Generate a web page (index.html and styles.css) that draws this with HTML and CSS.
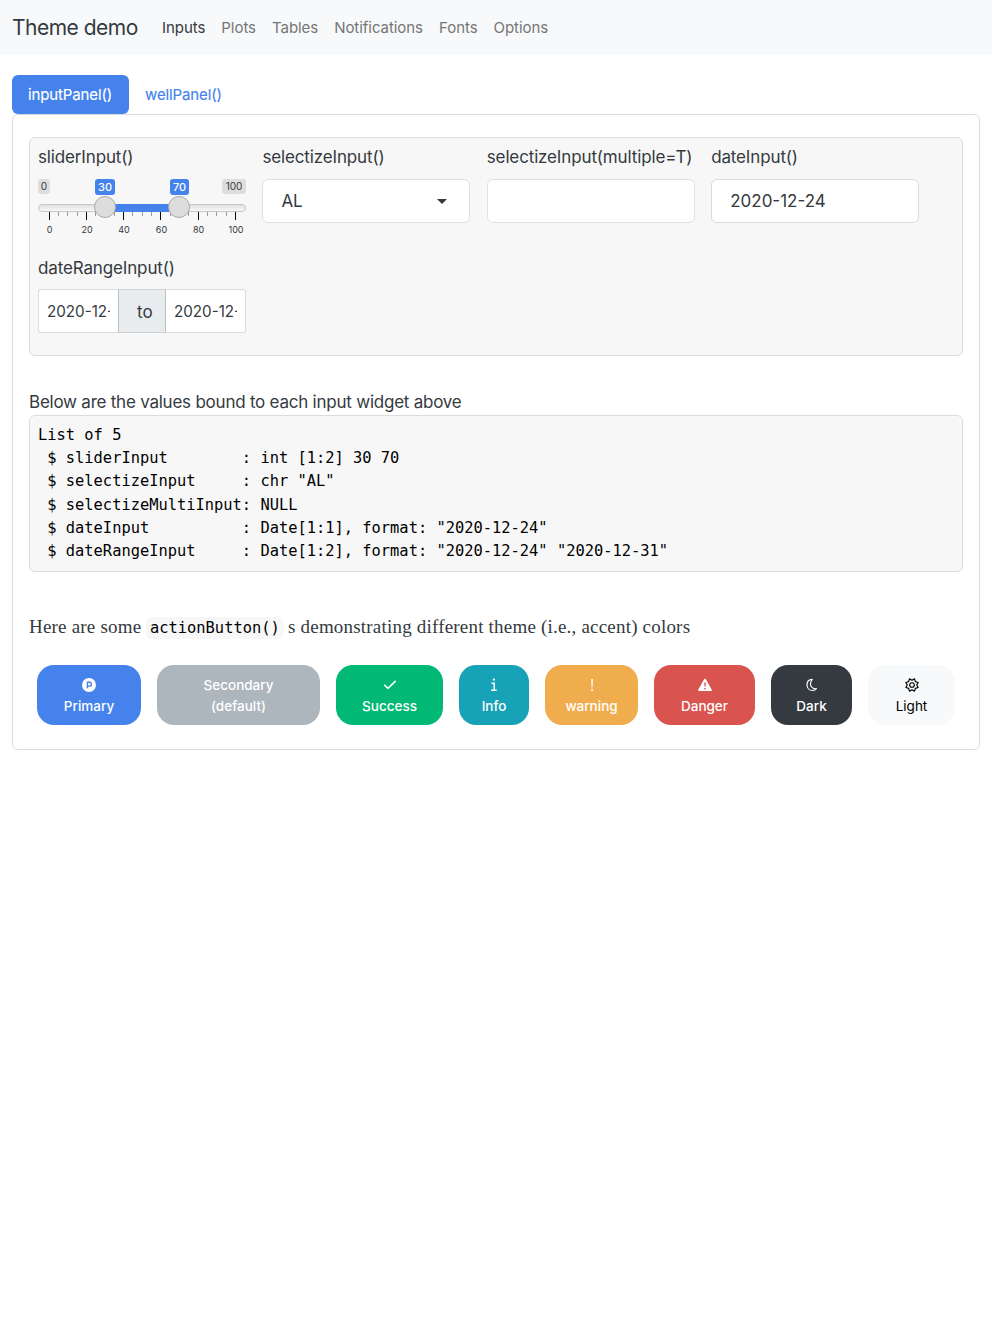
FILE: index.html
```html
<!DOCTYPE html>
<html lang="en">
<head>
<meta charset="utf-8">
<title>Theme demo</title>
<link rel="stylesheet" href="styles.css">
</head>
<body>
<nav class="navbar">
  <span class="brand">Theme demo</span>
  <a class="nav-link active">Inputs</a>
  <a class="nav-link">Plots</a>
  <a class="nav-link">Tables</a>
  <a class="nav-link">Notifications</a>
  <a class="nav-link">Fonts</a>
  <a class="nav-link">Options</a>
</nav>
<main class="container">
  <div class="tabs">
    <a class="tab active">inputPanel()</a>
    <a class="tab">wellPanel()</a>
  </div>
  <section class="card">
    <div class="input-panel">
      <div class="field">
        <label>sliderInput()</label>
        <svg class="slider" width="208" height="60" viewBox="0 0 208 60">
          <defs>
            <linearGradient id="track" x1="0" y1="0" x2="0" y2="1"><stop offset="0" stop-color="#dedede"/><stop offset="1" stop-color="#fafafa"/></linearGradient>
          </defs>
          <rect x="0" y="0" width="12" height="15" rx="3" fill="#dddddd"/>
          <rect x="184" y="0" width="24" height="15" rx="3" fill="#dddddd"/>
          <rect x="57" y="0" width="20" height="16" rx="3" fill="#4582ec"/>
          <rect x="132" y="0" width="19" height="16" rx="3" fill="#4582ec"/>
          <g class="limit"><text x="6" y="11">0</text><text x="196" y="11">100</text></g>
          <g class="value"><text x="67" y="12">30</text><text x="141.500" y="12">70</text></g>
          <rect x=".5" y="25.500" width="207" height="7" rx="3.500" fill="url(#track)" stroke="#c6c6c6"/>
          <rect x="67" y="25" width="74" height="8" fill="#4582ec"/>
          <path d="M11.500 33v8M48.500 33v8M85.500 33v8M122.500 33v8M160.500 33v8M197.500 33v8" stroke="#000"/>
          <path d="M20.500 33v4M29.500 33v4M39.500 33v4M57.500 33v4M67.500 33v4M76.500 33v4M94.500 33v4M104.500 33v4M113.500 33v4M132.500 33v4M141.500 33v4M150.500 33v4M169.500 33v4M178.500 33v4M188.500 33v4" stroke="#999"/>
          <circle cx="67" cy="28" r="10.500" fill="#dddddd" stroke="#aaa"/>
          <circle cx="141" cy="28" r="10.500" fill="#dddddd" stroke="#aaa"/>
          <g class="scale"><text x="11.500" y="54">0</text><text x="49" y="54">20</text><text x="86" y="54">40</text><text x="123.500" y="54">60</text><text x="160.500" y="54">80</text><text x="198" y="54">100</text></g>
        </svg>
      </div>
      <div class="field">
        <label>selectizeInput()</label>
        <div class="control"><span>AL</span><i class="caret"></i></div>
      </div>
      <div class="field">
        <label>selectizeInput(multiple=T)</label>
        <div class="control"></div>
      </div>
      <div class="field">
        <label>dateInput()</label>
        <div class="control date"><span>2020-12-24</span></div>
      </div>
      <div class="field range-field">
        <label>dateRangeInput()</label>
        <div class="range">
          <div class="range-input start"><span>2020-12-24</span></div>
          <div class="addon">to</div>
          <div class="range-input end"><span>2020-12-31</span></div>
        </div>
      </div>
    </div>
    <p class="lead">Below are the values bound to each input widget above</p>
    <pre class="output">List of 5
 $ sliderInput        : int [1:2] 30 70
 $ selectizeInput     : chr "AL"
 $ selectizeMultiInput: NULL
 $ dateInput          : Date[1:1], format: "2020-12-24"
 $ dateRangeInput     : Date[1:2], format: "2020-12-24" "2020-12-31"</pre>
    <p class="serif"><span class="s1">Here are some</span><code>actionButton()</code><span class="s2">s demonstrating different theme (i.e., accent) colors</span></p>
    <div class="buttons">
      <button class="btn primary"><svg viewBox="0 0 14 14"><circle cx="7" cy="7" r="7" fill="#fff"/><path d="M5.400 10.300V4.300h2.100a1.900 1.900 0 0 1 0 3.800H5.400" fill="none" stroke="#4582ec" stroke-width="1.400"/></svg><span>Primary</span></button>
      <button class="btn secondary"><span>Secondary</span><span>(default)</span></button>
      <button class="btn success"><svg viewBox="0 0 14 14"><path d="M1.200 6.800 4.900 10.400 12.700 2.900" fill="none" stroke="#fff" stroke-width="1.500"/></svg><span>Success</span></button>
      <button class="btn info"><svg viewBox="0 0 14 14"><path d="M4.500 5.200h2.700v6.700M4 12.300h5.700" fill="none" stroke="#fff" stroke-width="1.500"/><circle cx="6.900" cy="1.700" r="1.150" fill="#fff"/></svg><span>Info</span></button>
      <button class="btn warn"><svg viewBox="0 0 14 14"><path d="M6.200 1h1.700l-.3 8.200H6.500zM6.200 10.800h1.700v1.900H6.200z" fill="#fff"/></svg><span>warning</span></button>
      <button class="btn danger"><svg viewBox="0 0 14 14"><path d="M7 .8q.6 0 .9.500l5.900 10.500q.4 1.200-.8 1.300H1q-1.200-.1-.8-1.300L6.100 1.300q.3-.5.900-.5z" fill="#fff"/><path d="M6.200 4.500h1.600l-.3 4.300h-1zM6.300 10h1.400v1.400H6.300z" fill="#d9534f"/></svg><span>Danger</span></button>
      <button class="btn dark"><svg viewBox="0 0 14 14"><path d="M7.300 1.400C3.800 1.500 2 4 2 6.900c0 3.300 2.400 5.600 5.500 5.600 1.700 0 3-.6 3.900-1.800C8.200 11 5.400 9.100 5.400 6c0-2 .8-3.500 1.900-4.600z" fill="none" stroke="#fff" stroke-width="1.200" stroke-linejoin="round"/></svg><span>Dark</span></button>
      <button class="btn light"><svg viewBox="0 0 14 14"><path d="M7 2.200 9.500 .9 10.400 3.600 13.100 4.500 11.800 7 13.100 9.500 10.400 10.400 9.500 13.100 7 11.800 4.500 13.100 3.600 10.400 .9 9.500 2.200 7 .9 4.500 3.600 3.600 4.500 .9z" fill="none" stroke="#000" stroke-width="1.200" stroke-linejoin="round"/><circle cx="7" cy="7" r="2.300" fill="none" stroke="#000" stroke-width="1.100"/></svg><span>Light</span></button>
    </div>
  </section>
</main>
</body>
</html>
```
FILE: styles.css
```css
* { box-sizing: border-box; }
body { margin: 0; background: #fff; color: #343a40; font-family: Inter, sans-serif; font-size: 17px; }
p, pre { margin: 0; }
.navbar { height: 55px; background: #f8f9fa; padding: 0 12px; display: flex; align-items: center; gap: 16px; }
.brand { font-size: 21px; width: 134px; letter-spacing: -.5px; white-space: nowrap; }
.nav-link { font-size: 15px; letter-spacing: -.05px; color: #757676; white-space: nowrap; }
.nav-link.active { color: #343a40; }
.container { padding: 20px 12px 0; }
.tabs { display: flex; height: 39px; font-size: 15px; letter-spacing: -.12px; }
.tab { padding: 0 16px; display: flex; align-items: center; color: #4582ec; white-space: nowrap; -webkit-text-stroke: .15px; }
.tab.active { width: 117px; background: #4582ec; color: #fff; border-radius: 6px; }
.card { border: 1px solid #dbdbdb; border-radius: 6px; height: 636px; padding: 22px 16px 0; }
.input-panel { height: 219px; border: 1px solid #dbdbdb; border-radius: 6px; background: #f7f7f7; padding: 7px 8px; display: grid; grid-template-columns: repeat(4, 208px); grid-template-rows: 111px 80px; column-gap: 16.400px; }
.field { display: flex; flex-direction: column; min-width: 0; }
.field label { height: 24px; line-height: 24px; margin-bottom: 10px; letter-spacing: -.14px; white-space: nowrap; }
.range-field label { margin-bottom: 9px; }
.slider { display: block; }
.slider text { text-anchor: middle; fill: #343a40; }
.slider .limit text { font-size: 10px; }
.slider .value text { font-size: 11px; fill: #fff; font-weight: 500; }
.slider .scale text { font-size: 9px; }
.control { height: 44px; border: 1px solid #e1e1e1; border-radius: 6px; background: #fff; padding: 0 22px 0 18px; display: flex; align-items: center; justify-content: space-between; }
.date { border-color: #dbdbdb; }
.caret { border: 5px solid transparent; border-top-color: #343a40; border-bottom: 0; }
.range { display: flex; height: 44px; }
.range-input { background: #fff; border: 1px solid #dbdbdb; padding: 0 8px; font-size: 15.200px; display: flex; align-items: center; }
.range-input span { display: block; width: 64px; overflow: hidden; white-space: nowrap; }
.start { border-radius: 3px 0 0 3px; border-right: 0; width: 80px; }
.end { border-radius: 0 3px 3px 0; border-left: 0; width: 80px; }
.addon { width: 48px; border: 1px solid #b9bec3; border-top-color: #ced2d5; border-bottom-color: #ced2d5; background: #e9ecef; display: flex; align-items: center; padding: 1px 0 0 18px; }
.lead { margin-top: 33px; height: 26px; line-height: 26px; letter-spacing: -.23px; white-space: nowrap; }
.output { height: 157px; border: 1px solid #dbdbdb; border-radius: 6px; background: #f7f7f7; color: #000; padding: 8px; font: 15.400px/23.200px "DejaVu Sans Mono", monospace; }
.serif { margin-top: 43px; height: 26px; display: flex; align-items: center; font-family: "Liberation Serif", serif; font-size: 19px; letter-spacing: .2px; white-space: nowrap; }
.s1 { width: 117px; }
.s1, .s2 { line-height: 22px; padding-bottom: 2px; }
.serif code { width: 138px; height: 22px; line-height: 22px; margin-right: 4px; background: #f7f7f7; border-radius: 6px; padding-left: 4px; color: #000; font-family: "DejaVu Sans Mono", monospace; font-size: 15.400px; letter-spacing: 0; }
.buttons { display: flex; gap: 16px; padding: 0 8px; margin-top: 24px; }
.btn { height: 60px; border: 0; border-radius: 17px; padding: 2px 0 0; color: #fff; font: 500 13.500px/21px Inter, sans-serif; display: flex; flex-direction: column; align-items: center; justify-content: center; }
.btn span { display: block; height: 21px; }
.btn svg { width: 14px; height: 14px; margin: 3px 0 4px; }
.primary { width: 104px; background: #4582ec; }
.secondary { width: 163px; background: #adb5bd; }
.success { width: 107px; background: #02b875; }
.info { width: 70px; background: #17a2b8; }
.warn { width: 93px; background: #f0ad4e; }
.danger { width: 101px; background: #d9534f; }
.dark { width: 81px; background: #343a40; }
.light { width: 87px; background: #f8f9fa; color: #000; font-weight: 400; }
```
